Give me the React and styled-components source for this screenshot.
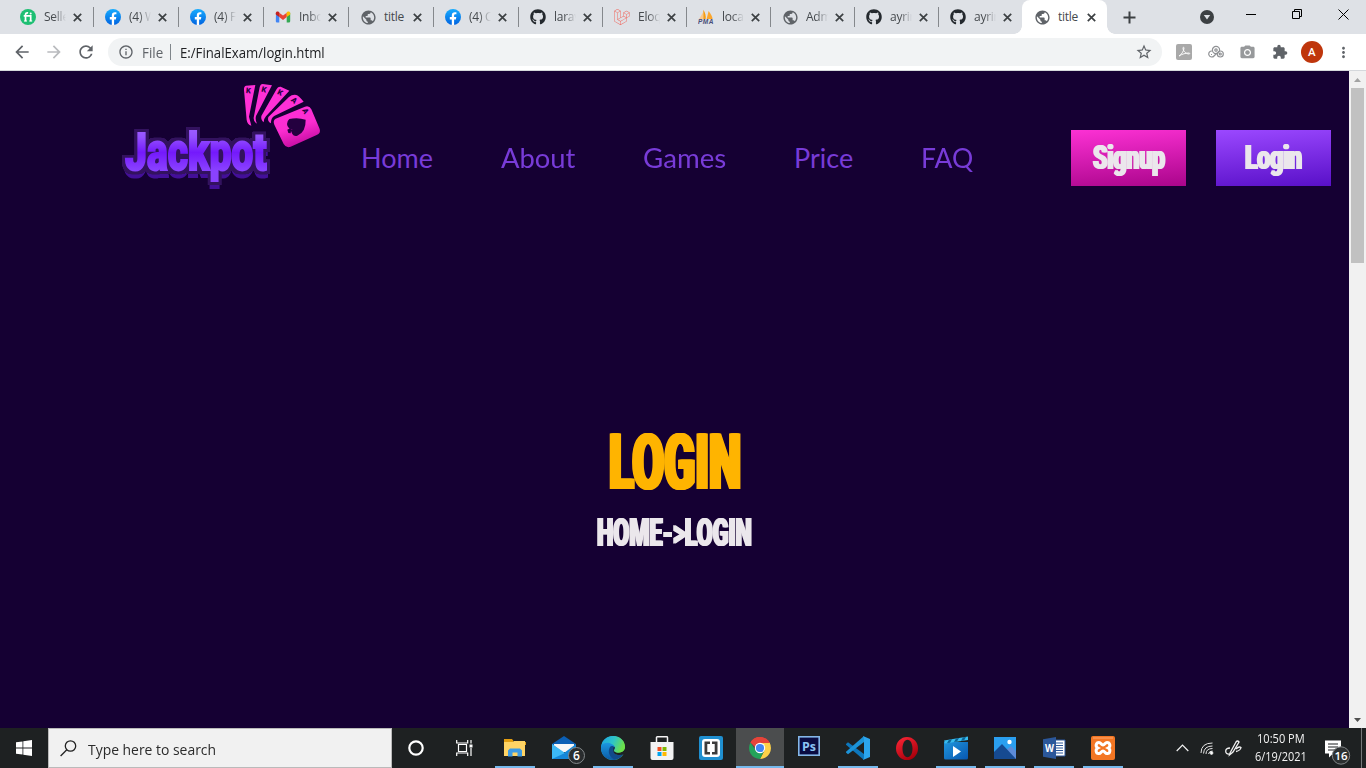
import React, { useLayoutEffect, useRef, useState } from "react";
import styled, { createGlobalStyle } from "styled-components";
import { FaGithub, FaLaravel } from "react-icons/fa";
import { MdPublic, MdStarBorder, MdExtension, MdRefresh, MdArrowBack, MdArrowForward, MdPhotoCamera, MdInfoOutline, MdMoreVert } from "react-icons/md";

const Global = createGlobalStyle`
  * { box-sizing: border-box; }
  body { margin: 0; overflow: hidden; font-family: "Open Sans", "Liberation Sans", sans-serif; }
  svg { display: block; flex: none; }
`;

/* ---------- text squeezed to a set width ---------- */
const FitBox = styled.span`
  display: block;
  flex: none;
  width: ${(p) => p.$w}px;
  white-space: pre;
`;
const FitInner = styled.span`
  display: inline-block;
  transform-origin: 0 50%;
`;
function Fit({ w, children }) {
  const ref = useRef(null);
  const [scale, setScale] = useState(1);
  useLayoutEffect(() => {
    setScale(w / ref.current.offsetWidth);
  }, [w]);
  return (
    <FitBox $w={w}>
      <FitInner ref={ref} style={{ transform: `scaleX(${scale})` }}>{children}</FitInner>
    </FitBox>
  );
}

/* ---------- browser frame ---------- */
const Screen = styled.div`
  width: 1366px;
  height: 768px;
  display: flex;
  flex-direction: column;
  overflow: hidden;
`;
const TabStrip = styled.div`
  height: 34px;
  flex: none;
  display: flex;
  background: #dee1e6;
  padding-left: 8px;
`;
const Tab = styled.div`
  width: ${(p) => p.$w}px;
  height: 34px;
  flex: none;
  display: flex;
  align-items: center;
  padding-left: 12px;
  position: relative;
  color: #45494d;
  background: ${(p) => (p.$active ? "#fff" : "transparent")};
  border-radius: ${(p) => (p.$active ? "8px 8px 0 0" : "0")};
  &::before, &::after {
    content: ${(p) => (p.$active ? '""' : "none")};
    position: absolute;
    bottom: 0;
    width: 8px;
    height: 8px;
  }
  &::before { left: -8px; background: radial-gradient(circle at 0 0, transparent 7.5px, #fff 8px); }
  &::after { right: -8px; background: radial-gradient(circle at 100% 0, transparent 7.5px, #fff 8px); }
`;
const TabRule = styled.i`
  position: absolute;
  right: -1px;
  top: 7px;
  width: 1px;
  height: 20px;
  background: #85888c;
`;
const TabIcon = styled.span`
  width: 16px;
  height: 16px;
  margin-right: 8px;
  flex: none;
`;
const TabTitle = styled.span`
  width: 22px;
  height: 18px;
  overflow: hidden;
  font-size: 12px;
  line-height: 17px;
  letter-spacing: -0.25px;
  white-space: pre;
  flex: none;
  ${(p) => p.$fade && "-webkit-mask-image: linear-gradient(90deg, #000 45%, transparent 100%);"}
`;
const TabClose = styled.span`
  margin-left: 7px;
`;
const NewTab = styled.span`
  padding: 11px 0 0 16px;
  width: 79px;
  flex: none;
`;
const Caption = styled.span`
  width: ${(p) => p.$w}px;
  flex: none;
  display: flex;
  justify-content: center;
  padding-top: ${(p) => p.$top}px;
`;
const Toolbar = styled.div`
  height: 37px;
  flex: none;
  display: flex;
  align-items: center;
  background: #fff;
  border-bottom: 1px solid #d5d8dc;
  padding: 0 12px 0 12px;
`;
const NavIcons = styled.div`
  display: flex;
  gap: 12px;
  color: #5f6368;
  width: 96px;
`;
const Omnibox = styled.div`
  width: 1054px;
  height: 28px;
  flex: none;
  border-radius: 14px;
  background: #f1f3f4;
  display: flex;
  align-items: center;
  padding: 0 10px;
  font-size: 14px;
  color: #202124;
`;
const Scheme = styled.span`
  color: #5f6368;
  margin: 0 7px 0 8px;
`;
const SchemeRule = styled.i`
  width: 1px;
  height: 16px;
  background: #80868b;
  margin-right: 9px;
`;
const StarSlot = styled.span`
  margin-left: auto;
  color: #5f6368;
  margin-right: -1px;
`;
const Extensions = styled.div`
  display: flex;
  align-items: center;
  margin-left: 14px;
  gap: 15.7px;
  color: #5f6368;
`;
const Avatar = styled.span`
  width: 22px;
  height: 22px;
  margin: 0 -3px;
  border-radius: 50%;
  background: #bf360c;
  color: #fff;
  font: 500 11.5px/22px Roboto, sans-serif;
  text-align: center;
`;

/* ---------- web page ---------- */
const Viewport = styled.div`
  height: 657px;
  flex: none;
  display: flex;
`;
const Site = styled.main`
  width: 1349px;
  background: #150033;
`;
const Header = styled.header`
  height: 176px;
  display: flex;
  align-items: flex-start;
  padding: 3px 18px 0 116px;
`;
const Menu = styled.nav`
  display: flex;
  gap: 68px;
  margin: 66px 0 0 35px;
  font: 400 27px/36px Lato, "Open Sans", sans-serif;
  color: #783bd8;
`;
const Actions = styled.div`
  display: flex;
  gap: 30px;
  margin: 56px 0 0 auto;
`;
const poster = `
  font-family: Roboto, "Liberation Sans", sans-serif;
  font-weight: 900;
`;
const Button = styled.button`
  width: 115px;
  height: 56px;
  border: 0;
  padding: 0;
  display: flex;
  align-items: center;
  justify-content: center;
  ${poster}
  font-size: 32.5px;
  line-height: 40px;
  letter-spacing: -0.4px;
  color: #ebe7ec;
  text-shadow: 1.4px 0 #ebe7ec, -1.4px 0 #ebe7ec;
  background: ${(p) => (p.$pink ? "linear-gradient(175deg, #fc31d4, #aa058b)" : "linear-gradient(175deg, #9b48ff, #5910c8)")};
`;
const Hero = styled.section`
  display: flex;
  flex-direction: column;
  align-items: center;
  padding-top: 166px;
`;
const Title = styled.h1`
  margin: 0;
  ${poster}
  font-size: 78px;
  line-height: 100px;
  color: #ffb400;
  text-shadow: 3px 0 #ffb400, -3px 0 #ffb400, 1.5px 0 #ffb400, -1.5px 0 #ffb400;
`;
const Crumb = styled.h2`
  margin: -3px 0 0;
  ${poster}
  font-size: 39px;
  line-height: 46px;
  color: #ebe7ec;
  text-shadow: 1.7px 0 #ebe7ec, -1.7px 0 #ebe7ec;
`;
const Scrollbar = styled.div`
  width: 17px;
  background: #f1f1f1;
  display: flex;
  flex-direction: column;
  align-items: center;
`;
const Arrow = styled.span`
  height: 17px;
  display: flex;
  align-items: center;
`;
const Thumb = styled.span`
  width: 13px;
  height: 175px;
  background: #c1c1c1;
  margin-bottom: auto;
`;

/* ---------- taskbar ---------- */
const Taskbar = styled.div`
  height: 40px;
  flex: none;
  display: flex;
  background: #1e2122;
`;
const Cell = styled.div`
  width: 48px;
  height: 40px;
  flex: none;
  display: flex;
  align-items: center;
  justify-content: center;
  position: relative;
  background: ${(p) => (p.$active ? "#4b4d4e" : "transparent")};
  &::after {
    content: ${(p) => (p.$open ? '""' : "none")};
    position: absolute;
    bottom: 0;
    height: 2px;
    left: ${(p) => (p.$active ? 0 : 4)}px;
    right: ${(p) => (p.$active ? 0 : 4)}px;
    background: #76b9ed;
  }
`;
const SearchBox = styled.div`
  width: 344px;
  height: 40px;
  border: 1px solid #bababa;
  background: #f1f1f1;
  display: flex;
  align-items: center;
  padding: 1px 0 0 11px;
  gap: 11px;
  color: #2b2b2b;
  font-size: 15px;
  line-height: 20px;
`;
const Apps = styled.div`
  display: flex;
  gap: 1px;
  margin-left: 3px;
`;
const Tray = styled.div`
  display: flex;
  align-items: center;
  margin-left: auto;
  margin-right: 4px;
  color: #f3f3f3;
`;
const TrayIcons = styled.div`
  display: flex;
  align-items: center;
  gap: 11px;
  margin-right: 13px;
`;
const Clock = styled.div`
  width: 52px;
  display: flex;
  flex-direction: column;
  align-items: center;
  font-size: 12px;
  line-height: 18px;
  padding-bottom: 1px;
`;
const Notices = styled.div`
  margin-left: 17px;
  width: 38px;
  height: 40px;
  border-right: 1px solid #75787a;
`;

/* ---------- small drawings ---------- */
const Cross = () => (
  <svg width="9" height="9" viewBox="0 0 9 9"><path d="M.8.8l7.4 7.4M8.2.8L.8 8.2" stroke="#3c4043" strokeWidth="1.7" /></svg>
);
const Fiverr = () => (
  <svg width="16" height="16" viewBox="0 0 16 16">
    <circle cx="8" cy="8" r="8" fill="#1dbf73" />
    <path d="M3.700 6.900h7v5.300M5.500 12.200V6c0-1.700.8-2.300 2.600-2.100" fill="none" stroke="#fff" strokeWidth="1.700" />
    <path d="M4 11.400h3v1.100H4zM9.200 11.400h3v1.100h-3z" fill="#fff" />
    <circle cx="10.700" cy="4.400" r="1" fill="#fff" />
  </svg>
);
const FacebookMark = () => (
  <svg width="16" height="16" viewBox="0 0 16 16">
    <defs><linearGradient id="fbk" x2="0" y2="1"><stop stopColor="#18acfe" /><stop offset="1" stopColor="#0163e0" /></linearGradient></defs>
    <circle cx="8" cy="8" r="8" fill="url(#fbk)" />
    <path d="M6.800 16v-5.600h-2V8.100h2V6.400c0-2.100 1.200-3.200 3-3.200.9 0 1.600.1 1.600.1v2h-1c-1 0-1.300.6-1.300 1.200v1.600h2.200l-.4 2.300H9.100V16z" fill="#fff" />
  </svg>
);
const Gmail = () => (
  <svg width="16" height="16" viewBox="0 0 16 16">
    <path d="M1 3.700L4.300 6v7.500H2A1.200 1.200 0 0 1 .8 12.300z" fill="#4285f4" />
    <path d="M11.700 6L15.200 3.700v8.600a1.200 1.200 0 0 1-1.200 1.200h-2.300z" fill="#34a853" />
    <path d="M4.200 3.700L8 6.600l3.800-2.900v4.300L8 10.900 4.200 8z" fill="#ea4335" />
    <path d="M.8 4.200c0-1.700 1.800-2.200 3-1.300l.5.400V8L.8 5.500z" fill="#c5221f" />
    <path d="M15.200 4.200c0-1.700-1.800-2.200-3-1.300l-.5.400V8l3.500-2.500z" fill="#fbbc04" />
  </svg>
);
const PmaText = styled.text`
  font: italic 700 6.5px "Liberation Sans", sans-serif;
`;
const Pma = () => (
  <svg width="16" height="16" viewBox="0 0 16 16">
    <path d="M1 10.300L5 3.500v6.800z" fill="#fbc88a" /><path d="M5.300 10V.8c2 2.700 2.700 6 2.400 9.200z" fill="#f89c0e" /><path d="M8.600 10l2-8c2.500 3 3.600 5.500 4 8z" fill="#fba62c" />
    <PmaText x="0" y="15.300" fill="#474d78" textLength="15.500">PMA</PmaText>
  </svg>
);

const tabs = [
  [<Fiverr />, "Selle", 85], [<FacebookMark />, "(4) W", 85], [<FacebookMark />, "(4) F", 85], [<Gmail />, "Inbox", 85],
  [<MdPublic size={17} color="#5f6368" />, "title", 85], [<FacebookMark />, "(4) C", 85], [<FaGithub size={16} color="#24292e" />, "larav", 84],
  [<FaLaravel size={16} color="#ef6a61" />, "Eloqu", 84], [<Pma />, "local", 84], [<MdPublic size={17} color="#5f6368" />, "Admi", 84],
  [<FaGithub size={16} color="#24292e" />, "ayrin", 84], [<FaGithub size={16} color="#24292e" />, "ayrin", 84],
];

const LogoWord = styled.text`
  font: 900 51px Roboto, "Liberation Sans", sans-serif;
`;
const CardMark = styled.text`
  font: 900 23px Roboto, sans-serif;
`;
const Logo = () => (
  <svg width="210" height="116" viewBox="116 74 210 116">
    <defs>
      <linearGradient id="word" x2="0" y2="1"><stop stopColor="#a468ff" /><stop offset=".25" stopColor="#9450ff" /><stop offset=".5" stopColor="#7419fc" /><stop offset=".8" stopColor="#8a42ff" /></linearGradient>
      <linearGradient id="card" x1=".3" y1="0" x2=".65" y2="1"><stop stopColor="#ff2fd8" /><stop offset=".5" stopColor="#fb2dd0" /><stop offset="1" stopColor="#bd079b" /></linearGradient>
      <filter id="edge" x="-10%" y="-20%" width="120%" height="150%" colorInterpolationFilters="sRGB">
        <feMorphology in="SourceAlpha" operator="dilate" radius="3" result="wide" />
        <feGaussianBlur in="wide" stdDeviation=".7" result="soft" />
        <feComponentTransfer in="soft" result="outline"><feFuncA type="linear" slope="3" intercept="-1" /></feComponentTransfer>
        <feFlood floodColor="#33125f" />
        <feComposite in2="outline" operator="in" result="rim" />
        <feOffset in="SourceAlpha" dy="5.500" result="low" />
        <feMorphology in="low" operator="dilate" radius="1" result="lowWide" />
        <feFlood floodColor="#430f98" />
        <feComposite in2="lowWide" operator="in" result="base" />
        <feMerge><feMergeNode in="base" /><feMergeNode in="rim" /><feMergeNode in="SourceGraphic" /></feMerge>
      </filter>
    </defs>
    <g filter="url(#edge)">
      <g transform="translate(125 170) scale(.75 1)">
        <LogoWord x="0" y="0" fill="url(#word)" stroke="url(#word)" strokeWidth="2" textLength="189" lengthAdjust="spacingAndGlyphs">Jackpot</LogoWord>
      </g>
    </g>
    <g transform="translate(100 70) scale(.33333)">
      <g fill="#ff30d6">
        <path d="M438 47l28-2-19 95 7 27q-12-3-14-17l-8-90q-1-11 6-13z" />
        <path d="M488 42l28 4-48 92q-3 11 3 23-11-5-10-18l18-91q2-10 9-10z" />
        <path d="M542 50l26 12-70 77q-8 9-7 18-9-7-7-19l46-81q4-8 12-7z" />
        <path d="M589 75q6 1 22 20l-87 42q-12 7-11 23-12-6-8-19l62-60q9-8 22-6z" />
      </g>
      <path d="M527 146l88-36q13-4 19 8l25 59q4 13-9 18l-78 35q-14 5-21-8l-28-58q-5-13 4-18z" fill="url(#card)" />
      <g fill="#24003f">
        <path d="M568 147q25-6 49 2 1 37-25 48-10 3-15-5l-4-9-1 7-7-1-3-10 8-4 3 4 6 1q-17-4-18-18 0-9 7-15z" />
        <CardMark x="438" y="70" transform="rotate(5 446 62)">K</CardMark>
        <CardMark x="485" y="66" transform="rotate(14 491 58)">K</CardMark>
        <CardMark x="533" y="75" transform="rotate(27 540 67)">K</CardMark>
        <CardMark x="575" y="99" transform="rotate(43 583 91)">A</CardMark>
        <CardMark x="609" y="131" transform="rotate(62 617 123)">A</CardMark>
      </g>
    </g>
  </svg>
);

const BadgeText = styled.text`
  font: 600 ${(p) => p.$size}px "Open Sans", sans-serif;
  text-anchor: middle;
`;
const Explorer = () => (
  <svg width="22" height="20" viewBox="0 0 22 20"><path d="M0 2h8l2 2h12v3H0z" fill="#e2a014" /><path d="M0 4h9l1-1h11v15H0z" fill="#ffd465" /><path d="M0 1h8l1.500 2H0z" fill="#e49e10" /><path d="M4 18.500v-6l2-2h10l2 2v6h-4.500v-4h-5v4z" fill="#3d9be5" /></svg>
);
const Mail = () => (
  <svg width="48" height="40" viewBox="0 0 48 40">
    <path d="M12 16L24 8l12 8v2H12z" fill="#0b5fb5" /><path d="M14 16h20v8H14z" fill="#f6f6f6" /><path d="M12 16l12 9 12-9v15H12z" fill="#1487d9" /><path d="M12 16l13 9-13 6z" fill="#3cb8f5" />
    <circle cx="36.500" cy="27.500" r="8" fill="#292c2e" stroke="#84898b" /><BadgeText $size={12} x="36.500" y="31.700" fill="#fff">6</BadgeText>
  </svg>
);
const Edge = () => (
  <svg width="24" height="24" viewBox="0 0 24 24">
    <defs>
      <linearGradient id="e1" x2="1" y2=".35"><stop stopColor="#1aa2e8" /><stop offset=".55" stopColor="#2fc5c6" /><stop offset="1" stopColor="#6be04b" /></linearGradient>
      <linearGradient id="e2" x2="0" y2="1"><stop stopColor="#1c9be4" /><stop offset="1" stopColor="#0c59a4" /></linearGradient>
    </defs>
    <circle cx="12" cy="12" r="12" fill="url(#e1)" />
    <path d="M0 12C0 7 5 5 9 6.500c4 1 5.500 4 4.500 6.500-2 4 1 6 4 6 2 0 4-1 5-1.500C20 22 16 24 12 24 5 24 0 18.500 0 12z" fill="url(#e2)" />
    <path d="M9 11c-3 5 0 11 5 12.700 4-.7 7-3.200 8.500-6.200-4 2-9 1.500-10-2-.6-2 .5-2.500 1-4-1-2-3.500-2-4.500-.5z" fill="#114a8b" />
    <path d="M13 10.500c1.500 1.500.4 2.700 0 3.700-.2 1.300 1.500 2.500 4 2.500 4 0 7.600-2.500 7-6.700l2 2-3 6c-3 1.700-8 1.500-10-1-1.300-2-.5-5 0-6.500z" fill="#1e2122" />
    <path d="M12 0c7 0 12 5 12 10.500 0 4-3 6-6.500 6-3 0-4.500-1.200-4-2.500 1.500-2 .5-4-1.500-5.200C8 5.500 2 6.500.4 9.500 1.500 4 6 0 12 0z" fill="url(#e1)" />
  </svg>
);
const Store = () => (
  <svg width="24" height="24" viewBox="0 0 24 24"><path d="M6.500 7V1.500q0-.7.8-.7h9.400q.8 0 .8.700V7" fill="none" stroke="#f4f4f4" strokeWidth="1.500" /><path d="M.5 6h23v16q0 2-2 2h-19q-2 0-2-2z" fill="#f3f3f3" /><path d="M7.500 11h4v4h-4z" fill="#f25022" /><path d="M12.500 11h4v4h-4z" fill="#7fba00" /><path d="M7.500 16h4v4h-4z" fill="#00a4ef" /><path d="M12.500 16h4v4h-4z" fill="#ffb900" /></svg>
);
const Brackets = () => (
  <svg width="24" height="24" viewBox="0 0 24 24"><rect width="24" height="24" rx="2" fill="#1f8fd0" /><rect x="3" y="3" width="18" height="18" rx="3" fill="#fff" /><path d="M11 5.500H5.500v13H11V16H8.300V8H11zM13 5.500h5.500v13H13V16h2.700V8H13z" fill="#3c3c3c" /></svg>
);
const Chrome = () => (
  <svg width="22" height="22" viewBox="0 0 22 22"><path d="M11 11L1.500 5.500A11 11 0 0 1 20.500 5.500z" fill="#ea4335" /><path d="M11 11l9.500-5.500A11 11 0 0 1 11 22l4.500-8.500z" fill="#fdd149" /><path d="M11 11l4.300 2.500L11 22A11 11 0 0 1 1.500 5.500L6.700 13.500z" fill="#24a35a" /><path d="M11 6h9.800q.6 3-.1 5H11z" fill="#fdd149" /><path d="M1.500 5.500A11 11 0 0 1 20.800 6H11L6 10z" fill="#e5443a" /><circle cx="11" cy="11" r="5.200" fill="#fff" /><circle cx="11" cy="11" r="4.100" fill="#4285f4" /></svg>
);
const PsText = styled.text`
  font: 700 12.500px "Open Sans", sans-serif;
`;
const Ps = () => (
  <svg width="22" height="24" viewBox="0 0 22 24"><rect x=".8" y=".8" width="20.400" height="18.400" fill="#0a0c43" stroke="#84b7e9" strokeWidth="1.600" /><PsText x="4" y="15" fill="#8bc4f4" textLength="14" lengthAdjust="spacingAndGlyphs">Ps</PsText></svg>
);
const VsCode = () => (
  <svg width="24" height="24" viewBox="0 0 24 24"><path d="M0 8l2-1.700 16 11.700v6L0 8.800z" fill="#0d77bd" /><path d="M0 16.500l2 1.700L18 6V0L0 15.700z" fill="#1c93d8" /><path d="M17 0l7 3v18l-7 3q1-1 1-3V3q0-2-1-3z" fill="#2ba5ee" /></svg>
);
const Opera = () => (
  <svg width="23" height="23" viewBox="0 0 23 23"><defs><linearGradient id="op" x2=".6" y2="1"><stop stopColor="#ff2838" /><stop offset="1" stopColor="#a9000c" /></linearGradient></defs><path fillRule="evenodd" d="M11 0a11 11.500 0 1 0 0 23 11 11.500 0 1 0 0-23zm.5 2.700c3 0 5 4 5 8.800s-2 8.800-5 8.800-5-4-5-8.800 2-8.800 5-8.800z" fill="url(#op)" /></svg>
);
const Movies = () => (
  <svg width="24" height="24" viewBox="0 0 24 24"><defs><linearGradient id="mv" x2="1" y2="1"><stop stopColor="#2096dc" /><stop offset="1" stopColor="#0756b0" /></linearGradient></defs><path d="M0 6h24v16q0 1.500-1.500 1.500h-21Q0 23.500 0 22z" fill="url(#mv)" /><path d="M0 4.500L24 .5v3.500L1 7.500z" fill="#38bbed" /><path d="M5 3.700l3-.5-2 3.500-3 .4zM12 2.500l3-.5-2 3.500-3 .4zM19 1.300l3-.4-2 3.500-3 .4z" fill="#0d6497" /><path d="M9 10v11l8-5.500z" fill="#fff" /></svg>
);
const Photos = () => (
  <svg width="22" height="22" viewBox="0 0 22 22"><path d="M0 0h22v22H0z" fill="#2a9ff0" /><path d="M11 14l6-5 5 5v8H11z" fill="#5d8bd8" /><path d="M0 15l8-8 14 15H0z" fill="#164a91" /><circle cx="15.500" cy="5" r="2.200" fill="#fff" /></svg>
);
const LetterText = styled.text`
  font: 700 11px "Open Sans", sans-serif;
`;
const WordApp = () => (
  <svg width="23" height="22" viewBox="0 0 23 22"><path d="M12 3h10v16H12z" fill="#fff" stroke="#2b579a" /><path d="M13 6h7M13 8.500h7M13 11h7M13 13.500h7M13 16h7" stroke="#2b579a" /><path d="M0 2.300L13 0v22L0 19.700z" fill="#2b579a" /><LetterText x="2" y="15" fill="#fff" textLength="9" lengthAdjust="spacingAndGlyphs">W</LetterText></svg>
);
const Xampp = () => (
  <svg width="24" height="24" viewBox="0 0 24 24"><rect width="24" height="24" rx="2" fill="#f37623" /><path d="M2 2h20" stroke="#ffa970" /><path d="M8 6.500c-3 0-4 4-1.200 5.500C4 13.500 5 18 8 17.500c2 0 2.200-2.500 4-2.500s2 2.500 4 2.500c3 .5 4-4 1.200-5.500C20 10.500 19 6.500 16 6.500c-2 0-2.200 2.500-4 2.500S10 6.500 8 6.500z" fill="none" stroke="#fff" strokeWidth="3" /></svg>
);
const apps = [
  [<Explorer />, true], [<Mail />], [<Edge />, true], [<Store />], [<Brackets />], [<Chrome />, true, true], [<Ps />],
  [<VsCode />, true], [<Opera />], [<Movies />, true], [<Photos />, true], [<WordApp />, true], [<Xampp />, true],
];

export default function App() {
  return (
    <Screen>
      <Global />
      <TabStrip>
        {tabs.map(([icon, title, w], i) => (
          <Tab key={i} $w={w}>
            <TabIcon>{icon}</TabIcon>
            <TabTitle $fade={title !== "title"}>{title}</TabTitle>
            <TabClose><Cross /></TabClose>
            {i < 11 && <TabRule />}
          </Tab>
        ))}
        <Tab $w={85} $active>
          <TabIcon><MdPublic size={17} color="#5f6368" /></TabIcon>
          <TabTitle>title</TabTitle>
          <TabClose><Cross /></TabClose>
        </Tab>
        <NewTab><svg width="13" height="13" viewBox="0 0 13 13"><path d="M6.500.5v12M.5 6.500h12" stroke="#3c4043" strokeWidth="2" /></svg></NewTab>
        <Caption $w={42} $top={10}><svg width="14" height="14" viewBox="0 0 14 14"><circle cx="7" cy="7" r="7" fill="#3c4043" /><path d="M3.800 5h6.400L7 9.500z" fill="#dee1e6" /></svg></Caption>
        <Caption $w={46} $top={14}><svg width="10" height="1"><path d="M0 .5h10" stroke="#000" /></svg></Caption>
        <Caption $w={46} $top={9}><svg width="10" height="10" viewBox="0 0 10 10"><path d="M.5 2.500h7v7h-7zM2.500 2.500v-2h7v7h-2" fill="none" stroke="#000" /></svg></Caption>
        <Caption $w={46} $top={9}><svg width="11" height="11" viewBox="0 0 11 11"><path d="M.5.500l10 10M10.500.5l-10 10" stroke="#000" /></svg></Caption>
      </TabStrip>
      <Toolbar>
        <NavIcons><MdArrowBack size={20} /><MdArrowForward size={20} color="#b9bbbe" /><MdRefresh size={20} /></NavIcons>
        <Omnibox>
          <MdInfoOutline size={16} color="#5f6368" />
          <Scheme><Fit w={21}>File</Fit></Scheme>
          <SchemeRule />
          <Fit w={145}>E:/FinalExam/login.html</Fit>
          <StarSlot><MdStarBorder size={18} /></StarSlot>
        </Omnibox>
        <Extensions>
          <svg width="16" height="16" viewBox="0 0 16 16"><rect width="16" height="16" rx="2" fill="#a9a9a9" /><path d="M3 12c2-1 5-5 5-8 0-1-1-1-1 0 0 3 3 6 6 6 1 0 1-1 0-1-3 0-7 1-10 3z" fill="none" stroke="#fff" strokeWidth=".9" /></svg>
          <svg width="16" height="14" viewBox="0 0 16 14" fill="none" stroke="#909295" strokeWidth="1.200"><circle cx="8" cy="5" r="3.600" /><circle cx="8" cy="5" r="1.200" /><circle cx="12.300" cy="9" r="3" /><circle cx="12.300" cy="9" r="1" /><path d="M4 6a3 3 0 1 0 2 5l3-3M3 9.500h1" /></svg>
          <MdPhotoCamera size={17} color="#97999b" />
          <MdExtension size={16} />
          <Avatar>A</Avatar>
          <MdMoreVert size={17} />
        </Extensions>
      </Toolbar>
      <Viewport>
        <Site>
          <Header>
            <Logo />
            <Menu>
              <Fit w={72}>Home</Fit><Fit w={74}>About</Fit><Fit w={83}>Games</Fit><Fit w={59}>Price</Fit><Fit w={52}>FAQ</Fit>
            </Menu>
            <Actions>
              <Button $pink><Fit w={72}>Signup</Fit></Button>
              <Button><Fit w={57}>Login</Fit></Button>
            </Actions>
          </Header>
          <Hero>
            <Title><Fit w={132}>LOGIN</Fit></Title>
            <Crumb><Fit w={155}>{"HOME->LOGIN"}</Fit></Crumb>
          </Hero>
        </Site>
        <Scrollbar>
          <Arrow><svg width="7" height="4"><path d="M3.500 0L7 4H0z" fill="#a3a3a3" /></svg></Arrow>
          <Thumb />
          <Arrow><svg width="7" height="4"><path d="M3.500 4L7 0H0z" fill="#505050" /></svg></Arrow>
        </Scrollbar>
      </Viewport>
      <Taskbar>
        <Cell><svg width="16" height="16" viewBox="0 0 16 16"><path d="M0 2.300L6.500 1.400v6.200H0zM7.300 1.300L16 0v7.600H7.300zM0 8.400h6.500v6.200L0 13.700zM7.300 8.400H16V16l-8.700-1.300z" fill="#fff" /></svg></Cell>
        <SearchBox>
          <svg width="17" height="17" viewBox="0 0 17 17"><circle cx="10.500" cy="6" r="5.200" fill="none" stroke="#222" strokeWidth="1.300" /><path d="M6.800 9.700L.6 16" stroke="#222" strokeWidth="1.300" /></svg>
          <Fit w={128}>Type here to search</Fit>
        </SearchBox>
        <Cell><svg width="16" height="16" viewBox="0 0 16 16"><circle cx="8" cy="8" r="6.700" fill="none" stroke="#fff" strokeWidth="2.200" /></svg></Cell>
        <Cell><svg width="17" height="16" viewBox="0 0 17 16"><path d="M.7 0v3h11V0M2.500 4.500h8v7h-8zM.7 16v-3h11v3M15 0v3.500M15 8v8" fill="none" stroke="#fff" strokeWidth="1.200" /><path d="M13.500 4.500h3v3h-3z" fill="#fff" /></svg></Cell>
        <Apps>{apps.map(([icon, open, active], i) => <Cell key={i} $open={open} $active={active}>{icon}</Cell>)}</Apps>
        <Tray>
          <TrayIcons>
            <svg width="13" height="8" viewBox="0 0 13 8"><path d="M.7 7l5.800-5.800L12.300 7" fill="none" stroke="#f3f3f3" strokeWidth="1.200" /></svg>
            <svg width="14" height="16" viewBox="0 0 14 16" fill="none" stroke="#e4e4e4"><path d="M1 13Q1 3 12.500 3M3.500 13.500Q4 6 12.500 6M6 14Q6 8.500 12.500 8.500M8.500 14Q9 11 12.500 11" /><circle cx="11.500" cy="13" r="1.400" fill="#fff" /></svg>
            <svg width="17" height="17" viewBox="0 0 17 17" fill="none" stroke="#f1f1f1" strokeWidth="1.300"><path d="M5 13L11 2q1.500-2 3 0L8 12l-3.500 3zM5 8q-4 0-4.300 3 0 3.500 4 3M11 9q3-3 5-1.500-.5 3-5 4" /></svg>
          </TrayIcons>
          <Clock><Fit w={48}>10:50 PM</Fit><Fit w={52}>6/19/2021</Fit></Clock>
          <Notices>
            <svg width="30" height="40" viewBox="0 0 30 40"><path d="M1 12.500h16v13H9l-4 4v-4H1z" fill="#fff" /><path d="M4 16h10M4 19h10M4 22h8" stroke="#1e2122" strokeWidth="1.200" /><circle cx="17" cy="27.500" r="8.700" fill="#2d3031" stroke="#808486" /><BadgeText $size={11.5} x="17" y="31.500" fill="#fff">16</BadgeText></svg>
          </Notices>
        </Tray>
      </Taskbar>
    </Screen>
  );
}
